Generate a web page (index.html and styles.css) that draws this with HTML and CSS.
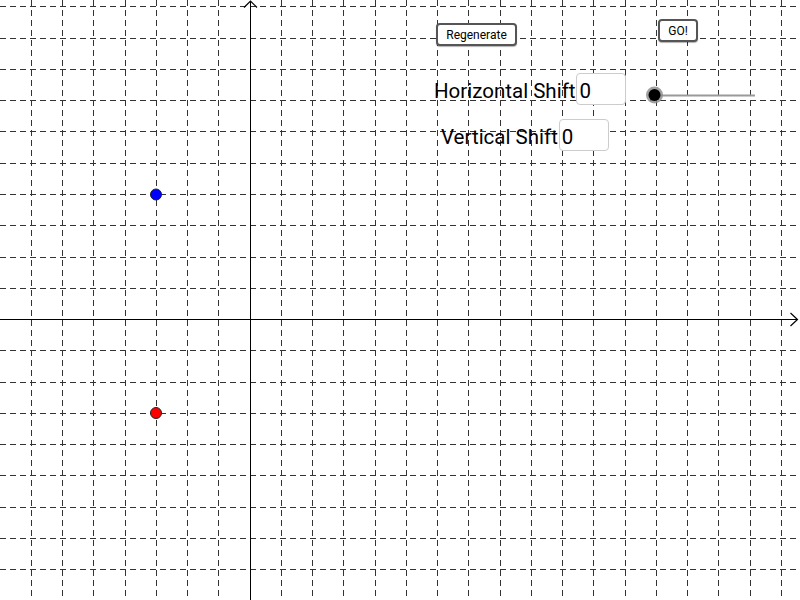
FILE: index.html
```html
<!DOCTYPE html>
<html>
<head>
<meta charset="utf-8">
<link rel="stylesheet" href="styles.css">
</head>
<body>
<div class="canvas">
<svg class="graph" width="800" height="600" viewBox="0 0 800 600">
  <g class="grid">
    <line x1="31.5" y1="0" x2="31.5" y2="600"/>
    <line x1="62.5" y1="0" x2="62.5" y2="600"/>
    <line x1="93.5" y1="0" x2="93.5" y2="600"/>
    <line x1="125.5" y1="0" x2="125.5" y2="600"/>
    <line x1="156.5" y1="0" x2="156.5" y2="600"/>
    <line x1="187.5" y1="0" x2="187.5" y2="600"/>
    <line x1="218.5" y1="0" x2="218.5" y2="600"/>
    <line x1="281.5" y1="0" x2="281.5" y2="600"/>
    <line x1="312.5" y1="0" x2="312.5" y2="600"/>
    <line x1="343.5" y1="0" x2="343.5" y2="600"/>
    <line x1="375.5" y1="0" x2="375.5" y2="600"/>
    <line x1="406.5" y1="0" x2="406.5" y2="600"/>
    <line x1="437.5" y1="0" x2="437.5" y2="600"/>
    <line x1="468.5" y1="0" x2="468.5" y2="600"/>
    <line x1="500.5" y1="0" x2="500.5" y2="600"/>
    <line x1="531.5" y1="0" x2="531.5" y2="600"/>
    <line x1="562.5" y1="0" x2="562.5" y2="600"/>
    <line x1="593.5" y1="0" x2="593.5" y2="600"/>
    <line x1="625.5" y1="0" x2="625.5" y2="600"/>
    <line x1="656.5" y1="0" x2="656.5" y2="600"/>
    <line x1="687.5" y1="0" x2="687.5" y2="600"/>
    <line x1="718.5" y1="0" x2="718.5" y2="600"/>
    <line x1="750.5" y1="0" x2="750.5" y2="600"/>
    <line x1="781.5" y1="0" x2="781.5" y2="600"/>
    <line x1="0" y1="6.5" x2="800" y2="6.5"/>
    <line x1="0" y1="38.5" x2="800" y2="38.5"/>
    <line x1="0" y1="69.5" x2="800" y2="69.5"/>
    <line x1="0" y1="100.5" x2="800" y2="100.5"/>
    <line x1="0" y1="131.5" x2="800" y2="131.5"/>
    <line x1="0" y1="163.5" x2="800" y2="163.5"/>
    <line x1="0" y1="194.5" x2="800" y2="194.5"/>
    <line x1="0" y1="225.5" x2="800" y2="225.5"/>
    <line x1="0" y1="257.5" x2="800" y2="257.5"/>
    <line x1="0" y1="288.5" x2="800" y2="288.5"/>
    <line x1="0" y1="350.5" x2="800" y2="350.5"/>
    <line x1="0" y1="382.5" x2="800" y2="382.5"/>
    <line x1="0" y1="413.5" x2="800" y2="413.5"/>
    <line x1="0" y1="444.5" x2="800" y2="444.5"/>
    <line x1="0" y1="475.5" x2="800" y2="475.5"/>
    <line x1="0" y1="507.5" x2="800" y2="507.5"/>
    <line x1="0" y1="538.5" x2="800" y2="538.5"/>
    <line x1="0" y1="569.5" x2="800" y2="569.5"/>
  </g>
  <g class="axes">
    <line x1="0" y1="319.5" x2="798" y2="319.5"/>
    <line x1="250.5" y1="1" x2="250.5" y2="600"/>
    <polyline points="790.5,313 797.5,319.5 790.5,326"/>
    <polyline points="244,7.5 250.5,1 257,7.5"/>
  </g>
  <circle class="pt blue" cx="156" cy="194.5" r="5.5"/>
  <circle class="pt red" cx="156" cy="413" r="5.5"/>
  <line class="track" x1="655" y1="95.5" x2="755" y2="95.5"/>
  <circle class="knob-halo" cx="654.5" cy="95" r="8.5"/>
  <circle class="knob" cx="654.5" cy="95" r="6"/>
</svg>
<button class="btn btn-regen">Regenerate</button>
<button class="btn btn-go">GO!</button>
<div class="field field-h"><span class="label">Horizontal Shift</span><span class="input">0</span></div>
<div class="field field-v"><span class="label">Vertical Shift</span><span class="input">0</span></div>
</div>
</body>
</html>
```
FILE: styles.css
```css
html, body {
  margin: 0;
  padding: 0;
  background: #fff;
  font-family: Roboto, "Liberation Sans", sans-serif;
}
.canvas {
  position: relative;
  width: 800px;
  height: 600px;
  overflow: hidden;
  background: #fff;
}
.graph {
  display: block;
}
.grid line {
  stroke: #333;
  stroke-width: 1;
  stroke-dasharray: 6 4;
  shape-rendering: crispEdges;
}
.axes line {
  stroke: #000;
  stroke-width: 1;
  shape-rendering: crispEdges;
}
.axes polyline {
  fill: none;
  stroke: #000;
  stroke-width: 1.2;
}
.pt {
  stroke: #222;
  stroke-width: 1;
}
.blue { fill: #0000ff; }
.red { fill: #ff0000; }
.track {
  stroke: #9a9a9a;
  stroke-width: 2;
}
.knob-halo {
  fill: #888;
  opacity: 0.8;
}
.knob {
  fill: #000;
}
.btn {
  position: absolute;
  box-sizing: border-box;
  margin: 0;
  padding: 0;
  background: #fff;
  border: 2px solid #555;
  border-radius: 4px;
  font-family: Roboto, "Liberation Sans", sans-serif;
  font-size: 12px;
  color: #000;
  display: flex;
  align-items: center;
  justify-content: center;
  box-shadow: 0 1px 1px rgba(0,0,0,0.3);
}
.btn-regen {
  left: 436px;
  top: 23px;
  width: 81px;
  height: 23px;
}
.btn-go {
  left: 658px;
  top: 19px;
  width: 40px;
  height: 23px;
}
.field {
  position: absolute;
  display: flex;
  align-items: center;
  font-size: 20.5px;
  color: #000;
}
.field-h {
  left: 434px;
  top: 73px;
}
.field-v {
  left: 441px;
  top: 119px;
}
.label {
  padding-top: 4px;
}
.input {
  box-sizing: border-box;
  width: 50px;
  height: 32px;
  border: 1px solid #ccc;
  border-radius: 4px;
  background: #fff;
  padding: 4px 0 0 2px;
  line-height: 26px;
  margin-left: 1px;
}
```
